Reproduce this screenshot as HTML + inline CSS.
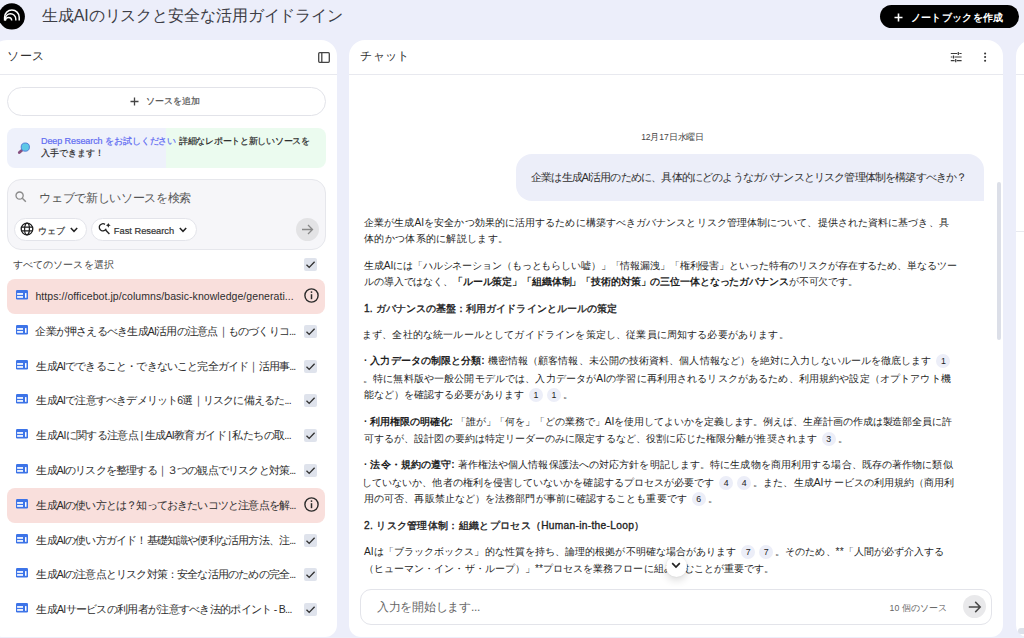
<!DOCTYPE html>
<html lang="ja"><head><meta charset="utf-8">
<style>
*{box-sizing:border-box;margin:0;padding:0}
html,body{width:1024px;height:638px;overflow:hidden}
body{background:#eceefa;font-family:"Liberation Sans",sans-serif;color:#1f1f1f;position:relative}
.a{position:absolute}
svg{position:absolute;overflow:visible}
.newbtn{left:880px;top:5px;width:139px;height:23px;border-radius:12px;background:#000}
.newbtn span{position:absolute;color:#fff;line-height:23px;font-weight:bold;white-space:nowrap}
.panel{background:#fff;border-radius:16px}
.p1{left:-9px;top:40px;width:346px;height:596.5px;border-radius:16px 16px 12px 12px}
.p2{left:349px;top:40px;width:654px;height:596.5px;border-radius:16px 16px 12px 12px}
.p3{left:1016px;top:40px;width:40px;height:596.5px;border-radius:16px 16px 12px 12px}
.ph{font-size:12px;line-height:16px;color:#303030;white-space:nowrap}
.hr{height:1px;background:#e8e9ef}
.row{left:7px;width:318px;height:35px;border-radius:8px}
.pink{background:#f9dfdc}
.rtext{position:absolute;left:29px;top:0;line-height:35px;font-size:10.5px;color:#2d2d2d;white-space:nowrap}
.chk{position:absolute;left:297px;top:11px;width:13px;height:13px;background:#dfe3ec;border-radius:2px}
.ct{position:absolute;left:364px;font-size:10.2px;line-height:17px;color:#1f1f1f;white-space:nowrap}
.ct b{font-weight:bold;color:#1f1f1f}
.h{font-weight:normal;-webkit-text-stroke:0.35px #1f1f1f}
.cite{display:inline-block;width:14px;height:14px;border-radius:50%;background:#eceef8;font-size:8.8px;line-height:14px;text-align:center;vertical-align:middle;color:#222;margin:0 2px;font-weight:normal;position:relative;top:0px;letter-spacing:0}
</style></head><body>
<!-- header -->
<svg style="left:0;top:0" width="30" height="32" viewBox="0 0 30 32">
  <circle cx="11.8" cy="16.4" r="13.1" fill="#000"/>
  <path d="M4.6 20.6V17.3A7.3 7.3 0 0 1 19.2 17.3V20.6" fill="none" stroke="#fff" stroke-width="1.5"/>
  <path d="M5.2 20.6V19.05A5.3 5.3 0 0 1 15.8 19.05V20.6" fill="none" stroke="#fff" stroke-width="1.4"/>
  <path d="M5.5 20.6A3.1 3.1 0 0 1 11.7 20.6" fill="none" stroke="#fff" stroke-width="1.4"/>
</svg>
<div id="t_title" class="a" style="left:42.00px;top:5.40px;font-size:16.000px;letter-spacing:-0.105px;line-height:22px;color:#3d3d45;white-space:nowrap">生成AIのリスクと安全な活用ガイドライン</div>
<div class="a newbtn">
  <svg style="left:14px;top:8px" width="9" height="9" viewBox="0 0 9 9"><path d="M4.5 0.5V8.5M0.5 4.5H8.5" stroke="#fff" stroke-width="1.6"/></svg>
  <span id="t_new" style="left:30.80px;top:0.50px;font-size:10.309px;letter-spacing:0.325px;">ノートブックを作成</span>
</div>

<!-- panels -->
<div class="a panel p1"></div>
<div class="a panel p2"></div>
<div class="a panel p3"></div>

<!-- source panel -->
<div id="t_src" class="a ph" style="left:7.20px;top:48.40px;font-size:12.367px;letter-spacing:0.45px;">ソース</div>
<svg style="left:318px;top:52px" width="12" height="11" viewBox="0 0 12 11"><rect x="0.7" y="0.7" width="10.6" height="9.6" rx="1" fill="none" stroke="#444" stroke-width="1.3"/><path d="M3.8 0.7V10.3" stroke="#444" stroke-width="1.3"/></svg>
<div class="a hr" style="left:0;top:74px;width:337px"></div>

<div class="a" style="left:7px;top:87px;width:319px;height:29px;border:1px solid #e2e3e9;border-radius:15px"></div>
<svg style="left:130px;top:97px" width="9" height="9" viewBox="0 0 9 9"><path d="M4.5 0.5V8.5M0.5 4.5H8.5" stroke="#444" stroke-width="1.3"/></svg>
<div id="t_add" class="a" style="left:145.80px;top:93.90px;font-size:9.040px;line-height:14px;color:#555;white-space:nowrap;-webkit-text-stroke:0.2px #555;">ソースを追加</div>

<div class="a" style="left:7px;top:127.5px;width:319px;height:40px;border-radius:8px;background:linear-gradient(90deg,#eef1fb 50%,#ebfbef 50%)"></div>
<svg style="left:17px;top:140px" width="16" height="16" viewBox="0 0 16 16"><path d="M2.3 12.6 L5.2 9.9" stroke="#86507e" stroke-width="2.8" stroke-linecap="round"/><circle cx="8.3" cy="7.1" r="4.1" fill="#5cc8e6" stroke="#4f7ed8" stroke-width="1"/></svg>
<div id="t_dr1" class="a" style="left:41.00px;top:135.40px;font-size:9.000px;letter-spacing:-0.08px;line-height:12px;white-space:nowrap;color:#5f6cf2;-webkit-text-stroke:0.2px #5f6cf2;">Deep Research をお試しください</div>
<div id="t_dr1b" class="a" style="left:178.80px;top:135.40px;font-size:9.000px;letter-spacing:-0.256px;line-height:12px;white-space:nowrap;color:#2a2a2a;-webkit-text-stroke:0.2px #2a2a2a;">詳細なレポートと新しいソースを</div>
<div id="t_dr2" class="a" style="left:41.00px;top:146.80px;font-size:9.122px;line-height:12px;white-space:nowrap;color:#303030;-webkit-text-stroke:0.2px #303030;">入手できます！</div>

<div class="a" style="left:7px;top:179px;width:319px;height:71px;border:1px solid #e6e7ec;border-radius:14px;background:#f6f6f9"></div>
<svg style="left:15px;top:191px" width="12" height="12" viewBox="0 0 12 12"><circle cx="4.6" cy="4.6" r="3.6" fill="none" stroke="#8a8a8a" stroke-width="1.3"/><path d="M7.3 7.3L10.8 10.8" stroke="#8a8a8a" stroke-width="1.4"/></svg>
<div id="t_search" class="a" style="left:39.40px;top:189.50px;font-size:11.773px;letter-spacing:-0.334px;line-height:16px;color:#555;white-space:nowrap">ウェブで新しいソースを検索</div>

<div class="a" style="left:14px;top:218px;width:73px;height:23px;border:1px solid #e3e4ea;border-radius:12px;background:#fff"></div>
<svg style="left:20.4px;top:222.1px" width="14" height="14" viewBox="0 0 14 14"><circle cx="7" cy="7" r="5.8" fill="none" stroke="#1f1f1f" stroke-width="1.3"/><ellipse cx="7" cy="7" rx="2.4" ry="5.8" fill="none" stroke="#1f1f1f" stroke-width="1.2"/><path d="M1.4 5.1H12.6M1.4 8.9H12.6" stroke="#1f1f1f" stroke-width="1.2"/></svg>
<div id="t_web" class="a" style="left:37.60px;top:223.60px;font-size:8.924px;letter-spacing:0.15px;line-height:14px;color:#333;white-space:nowrap;-webkit-text-stroke:0.2px #333;">ウェブ</div>
<svg style="left:70px;top:226.5px" width="8" height="6" viewBox="0 0 8 6"><path d="M0.8 1L4 4.3L7.2 1" fill="none" stroke="#222" stroke-width="1.5"/></svg>

<div class="a" style="left:91px;top:218px;width:106px;height:23px;border:1px solid #e3e4ea;border-radius:12px;background:#fff"></div>
<svg style="left:98px;top:222px" width="14" height="14" viewBox="0 0 14 14"><path d="M8.16 6.82 A3.6 3.6 0 1 1 6.96 2.35" fill="none" stroke="#222" stroke-width="1.3"/><path d="M7.6 8.1L11.4 11.9" stroke="#222" stroke-width="1.4"/><path d="M10.3 0.9 Q10.7 2.9 12.7 3.3 Q10.7 3.7 10.3 5.7 Q9.9 3.7 7.9 3.3 Q9.9 2.9 10.3 0.9Z" fill="#222"/></svg>
<div id="t_fast" class="a" style="left:113.80px;top:223.90px;font-size:9.292px;line-height:14px;color:#333;white-space:nowrap;-webkit-text-stroke:0.2px #333;">Fast Research</div>
<svg style="left:179px;top:226.5px" width="8" height="6" viewBox="0 0 8 6"><path d="M0.8 1L4 4.3L7.2 1" fill="none" stroke="#222" stroke-width="1.5"/></svg>

<div class="a" style="left:296px;top:218px;width:23px;height:23px;border-radius:50%;background:#e3e3e5"></div>
<svg style="left:301px;top:224px" width="13" height="11" viewBox="0 0 13 11"><path d="M1 5.5H11.5M7 1L11.5 5.5L7 10" fill="none" stroke="#888" stroke-width="1.3"/></svg>

<div id="t_all" class="a" style="left:12.60px;top:258.10px;font-size:10.371px;letter-spacing:0.132px;line-height:14px;color:#444;white-space:nowrap">すべてのソースを選択</div>
<div class="a" style="left:304px;top:258px;width:13px;height:13px;background:#dfe3ec;border-radius:2px"></div>
<svg style="left:304px;top:258px" width="13" height="13" viewBox="0 0 13 13"><path d="M2.5 6.8L5.2 9.4L10.6 3.8" fill="none" stroke="#303030" stroke-width="1.35"/></svg>

<div class="a row pink" style="top:279.00px"><svg style="left:9px;top:11px" width="12" height="10" viewBox="0 0 12 10"><rect x="0" y="0" width="12" height="9.4" rx="1.2" fill="#3d74e8"/><rect x="1.1" y="3.1" width="5.9" height="1.7" fill="#fff"/><rect x="1.1" y="6.1" width="5.9" height="1.7" fill="#fff"/><rect x="9" y="3.1" width="1.5" height="4.7" fill="#fff"/></svg><div id="r0" class="rtext" style="left:28.40px;top:0.00px;font-size:10.500px;letter-spacing:0.062px;">https://officebot.jp/columns/basic-knowledge/generati...</div><svg style="left:297px;top:9px" width="15" height="15" viewBox="0 0 15 15"><circle cx="7.5" cy="7.5" r="6.6" fill="none" stroke="#2b2b2b" stroke-width="1.4"/><path d="M7.5 6.2V11.2" stroke="#2b2b2b" stroke-width="1.5"/><circle cx="7.5" cy="4.1" r="0.9" fill="#2b2b2b"/></svg></div>
<div class="a row" style="top:313.80px"><svg style="left:9px;top:11px" width="12" height="10" viewBox="0 0 12 10"><rect x="0" y="0" width="12" height="9.4" rx="1.2" fill="#3d74e8"/><rect x="1.1" y="3.1" width="5.9" height="1.7" fill="#fff"/><rect x="1.1" y="6.1" width="5.9" height="1.7" fill="#fff"/><rect x="9" y="3.1" width="1.5" height="4.7" fill="#fff"/></svg><div id="r1" class="rtext" style="left:28.40px;top:0.00px;font-size:10.500px;letter-spacing:-0.779px;">企業が押さえるべき生成AI活用の注意点｜ものづくりコ...</div><div class="chk"></div><svg style="left:297px;top:11px" width="13" height="13" viewBox="0 0 13 13"><path d="M2.5 6.8L5.2 9.4L10.6 3.8" fill="none" stroke="#303030" stroke-width="1.35"/></svg></div>
<div class="a row" style="top:348.60px"><svg style="left:9px;top:11px" width="12" height="10" viewBox="0 0 12 10"><rect x="0" y="0" width="12" height="9.4" rx="1.2" fill="#3d74e8"/><rect x="1.1" y="3.1" width="5.9" height="1.7" fill="#fff"/><rect x="1.1" y="6.1" width="5.9" height="1.7" fill="#fff"/><rect x="9" y="3.1" width="1.5" height="4.7" fill="#fff"/></svg><div id="r2" class="rtext" style="left:29.40px;top:0.00px;font-size:10.500px;letter-spacing:-0.814px;">生成AIでできること・できないこと完全ガイド｜活用事...</div><div class="chk"></div><svg style="left:297px;top:11px" width="13" height="13" viewBox="0 0 13 13"><path d="M2.5 6.8L5.2 9.4L10.6 3.8" fill="none" stroke="#303030" stroke-width="1.35"/></svg></div>
<div class="a row" style="top:383.40px"><svg style="left:9px;top:11px" width="12" height="10" viewBox="0 0 12 10"><rect x="0" y="0" width="12" height="9.4" rx="1.2" fill="#3d74e8"/><rect x="1.1" y="3.1" width="5.9" height="1.7" fill="#fff"/><rect x="1.1" y="6.1" width="5.9" height="1.7" fill="#fff"/><rect x="9" y="3.1" width="1.5" height="4.7" fill="#fff"/></svg><div id="r3" class="rtext" style="left:29.40px;top:0.00px;font-size:10.500px;letter-spacing:-0.797px;">生成AIで注意すべきデメリット6選｜リスクに備えるた...</div><div class="chk"></div><svg style="left:297px;top:11px" width="13" height="13" viewBox="0 0 13 13"><path d="M2.5 6.8L5.2 9.4L10.6 3.8" fill="none" stroke="#303030" stroke-width="1.35"/></svg></div>
<div class="a row" style="top:418.20px"><svg style="left:9px;top:11px" width="12" height="10" viewBox="0 0 12 10"><rect x="0" y="0" width="12" height="9.4" rx="1.2" fill="#3d74e8"/><rect x="1.1" y="3.1" width="5.9" height="1.7" fill="#fff"/><rect x="1.1" y="6.1" width="5.9" height="1.7" fill="#fff"/><rect x="9" y="3.1" width="1.5" height="4.7" fill="#fff"/></svg><div id="r4" class="rtext" style="left:29.40px;top:0.00px;font-size:10.500px;letter-spacing:-0.649px;">生成AIに関する注意点 | 生成AI教育ガイド | 私たちの取...</div><div class="chk"></div><svg style="left:297px;top:11px" width="13" height="13" viewBox="0 0 13 13"><path d="M2.5 6.8L5.2 9.4L10.6 3.8" fill="none" stroke="#303030" stroke-width="1.35"/></svg></div>
<div class="a row" style="top:453.00px"><svg style="left:9px;top:11px" width="12" height="10" viewBox="0 0 12 10"><rect x="0" y="0" width="12" height="9.4" rx="1.2" fill="#3d74e8"/><rect x="1.1" y="3.1" width="5.9" height="1.7" fill="#fff"/><rect x="1.1" y="6.1" width="5.9" height="1.7" fill="#fff"/><rect x="9" y="3.1" width="1.5" height="4.7" fill="#fff"/></svg><div id="r5" class="rtext" style="left:29.40px;top:0.00px;font-size:10.500px;letter-spacing:-0.814px;">生成AIのリスクを整理する｜３つの観点でリスクと対策...</div><div class="chk"></div><svg style="left:297px;top:11px" width="13" height="13" viewBox="0 0 13 13"><path d="M2.5 6.8L5.2 9.4L10.6 3.8" fill="none" stroke="#303030" stroke-width="1.35"/></svg></div>
<div class="a row pink" style="top:487.80px"><svg style="left:9px;top:11px" width="12" height="10" viewBox="0 0 12 10"><rect x="0" y="0" width="12" height="9.4" rx="1.2" fill="#3d74e8"/><rect x="1.1" y="3.1" width="5.9" height="1.7" fill="#fff"/><rect x="1.1" y="6.1" width="5.9" height="1.7" fill="#fff"/><rect x="9" y="3.1" width="1.5" height="4.7" fill="#fff"/></svg><div id="r6" class="rtext" style="left:29.40px;top:0.00px;font-size:10.500px;letter-spacing:-0.813px;">生成AIの使い方とは？知っておきたいコツと注意点を解...</div><svg style="left:297px;top:9px" width="15" height="15" viewBox="0 0 15 15"><circle cx="7.5" cy="7.5" r="6.6" fill="none" stroke="#2b2b2b" stroke-width="1.4"/><path d="M7.5 6.2V11.2" stroke="#2b2b2b" stroke-width="1.5"/><circle cx="7.5" cy="4.1" r="0.9" fill="#2b2b2b"/></svg></div>
<div class="a row" style="top:522.60px"><svg style="left:9px;top:11px" width="12" height="10" viewBox="0 0 12 10"><rect x="0" y="0" width="12" height="9.4" rx="1.2" fill="#3d74e8"/><rect x="1.1" y="3.1" width="5.9" height="1.7" fill="#fff"/><rect x="1.1" y="6.1" width="5.9" height="1.7" fill="#fff"/><rect x="9" y="3.1" width="1.5" height="4.7" fill="#fff"/></svg><div id="r7" class="rtext" style="left:29.40px;top:0.00px;font-size:10.500px;letter-spacing:-0.814px;">生成AIの使い方ガイド！基礎知識や便利な活用方法、注...</div><div class="chk"></div><svg style="left:297px;top:11px" width="13" height="13" viewBox="0 0 13 13"><path d="M2.5 6.8L5.2 9.4L10.6 3.8" fill="none" stroke="#303030" stroke-width="1.35"/></svg></div>
<div class="a row" style="top:557.40px"><svg style="left:9px;top:11px" width="12" height="10" viewBox="0 0 12 10"><rect x="0" y="0" width="12" height="9.4" rx="1.2" fill="#3d74e8"/><rect x="1.1" y="3.1" width="5.9" height="1.7" fill="#fff"/><rect x="1.1" y="6.1" width="5.9" height="1.7" fill="#fff"/><rect x="9" y="3.1" width="1.5" height="4.7" fill="#fff"/></svg><div id="r8" class="rtext" style="left:29.40px;top:0.00px;font-size:10.500px;letter-spacing:-0.814px;">生成AIの注意点とリスク対策：安全な活用のための完全...</div><div class="chk"></div><svg style="left:297px;top:11px" width="13" height="13" viewBox="0 0 13 13"><path d="M2.5 6.8L5.2 9.4L10.6 3.8" fill="none" stroke="#303030" stroke-width="1.35"/></svg></div>
<div class="a row" style="top:592.20px"><svg style="left:9px;top:11px" width="12" height="10" viewBox="0 0 12 10"><rect x="0" y="0" width="12" height="9.4" rx="1.2" fill="#3d74e8"/><rect x="1.1" y="3.1" width="5.9" height="1.7" fill="#fff"/><rect x="1.1" y="6.1" width="5.9" height="1.7" fill="#fff"/><rect x="9" y="3.1" width="1.5" height="4.7" fill="#fff"/></svg><div id="r9" class="rtext" style="left:29.40px;top:0.00px;font-size:10.500px;letter-spacing:-0.699px;">生成AIサービスの利用者が注意すべき法的ポイント - B...</div><div class="chk"></div><svg style="left:297px;top:11px" width="13" height="13" viewBox="0 0 13 13"><path d="M2.5 6.8L5.2 9.4L10.6 3.8" fill="none" stroke="#303030" stroke-width="1.35"/></svg></div>

<!-- chat panel -->
<div id="t_chat" class="a ph" style="left:360.40px;top:48.30px;font-size:12.198px;letter-spacing:0.2px;">チャット</div>
<svg style="left:950px;top:51px" width="12" height="12" viewBox="0 0 12 12"><path d="M0.8 2.5H7.2M9.4 2.5H11.6M0.8 6H2.4M4.6 6H11.6M0.8 9.7H4.6M6.8 9.7H11.6M8.3 0.9V4.1M3.5 4.4V7.6M5.7 8.1V11.3" fill="none" stroke="#3a3a3a" stroke-width="1.2"/></svg>
<svg style="left:983px;top:51px" width="4" height="12" viewBox="0 0 4 12"><circle cx="2.1" cy="2.5" r="1.05" fill="#333"/><circle cx="2.1" cy="6" r="1.05" fill="#333"/><circle cx="2.1" cy="9.7" r="1.05" fill="#333"/></svg>
<div class="a hr" style="left:349px;top:74px;width:654px"></div>
<div class="a hr" style="left:1016px;top:74px;width:10px"></div>
<div class="a hr" style="left:1016px;top:231px;width:10px"></div>
<div class="a" style="left:1018px;top:628px;width:12px;height:5.5px;border-radius:3px;background:#dde1ea"></div>

<div id="t_date" class="a" style="left:641.20px;top:130.60px;font-size:8.537px;letter-spacing:-0.100px;line-height:13px;color:#444;white-space:nowrap">12月17日水曜日</div>
<div class="a" style="left:516px;top:154px;width:468px;height:47px;background:#eceef9;border-radius:16px 16px 0 16px"></div>
<div id="t_bub" class="a" style="left:531.00px;top:169.20px;font-size:10.524px;letter-spacing:-0.829px;line-height:17px;color:#303030;white-space:nowrap">企業は生成AI活用のために、具体的にどのようなガバナンスとリスク管理体制を構築すべきか？</div>
<div class="a" style="left:997px;top:182px;width:4px;height:158px;background:#dcdfe8;border-radius:2px"></div>

<div id="l1" class="ct" style="left:364.00px;top:213.50px;font-size:10.200px;letter-spacing:0.086px;">企業が生成AIを安全かつ効果的に活用するために構築すべきガバナンスとリスク管理体制について、提供された資料に基づき、具</div>
<div id="l2" class="ct" style="left:364.00px;top:230.10px;font-size:10.200px;letter-spacing:0.309px;">体的かつ体系的に解説します。</div>
<div id="l3" class="ct" style="left:364.00px;top:256.90px;font-size:10.200px;letter-spacing:-0.118px;">生成AIには「ハルシネーション（もっともらしい嘘）」「情報漏洩」「権利侵害」といった特有のリスクが存在するため、単なるツー</div>
<div id="l4" class="ct" style="left:364.00px;top:273.20px;font-size:10.200px;letter-spacing:-0.122px;">ルの導入ではなく、<b>「ルール策定」「組織体制」「技術的対策」の三位一体となったガバナンス</b>が不可欠です。</div>
<div id="l5" class="ct h" style="left:364.00px;top:299.70px;font-size:10.200px;letter-spacing:0.067px;">1. ガバナンスの基盤：利用ガイドラインとルールの策定</div>
<div id="l6" class="ct" style="left:362.00px;top:325.90px;font-size:10.200px;letter-spacing:0.161px;">まず、全社的な統一ルールとしてガイドラインを策定し、従業員に周知する必要があります。</div>
<div id="l7" class="ct" style="left:364.00px;top:352.10px;font-size:10.200px;letter-spacing:0.086px;"><b>· 入力データの制限と分類:</b> 機密情報（顧客情報、未公開の技術資料、個人情報など）を絶対に入力しないルールを徹底します <span class="cite">1</span></div>
<div id="l8" class="ct" style="left:363.00px;top:369.50px;font-size:10.200px;letter-spacing:0.139px;">。特に無料版や一般公開モデルでは、入力データがAIの学習に再利用されるリスクがあるため、利用規約や設定（オプトアウト機</div>
<div id="l9" class="ct" style="left:364.00px;top:386.00px;font-size:10.200px;">能など）を確認する必要があります <span class="cite">1</span><span class="cite">1</span>。</div>
<div id="l10" class="ct" style="left:364.00px;top:413.20px;font-size:10.200px;letter-spacing:-0.063px;"><b>· 利用権限の明確化:</b> 「誰が」「何を」「どの業務で」AIを使用してよいかを定義します。例えば、生産計画の作成は製造部全員に許</div>
<div id="l11" class="ct" style="left:364.00px;top:429.90px;font-size:10.200px;letter-spacing:0.064px;">可するが、設計図の要約は特定リーダーのみに限定するなど、役割に応じた権限分離が推奨されます <span class="cite">3</span>。</div>
<div id="l12" class="ct" style="left:364.00px;top:456.10px;font-size:10.200px;letter-spacing:0.101px;"><b>· 法令・規約の遵守:</b> 著作権法や個人情報保護法への対応方針を明記します。特に生成物を商用利用する場合、既存の著作物に類似</div>
<div id="l13" class="ct" style="left:362.00px;top:473.50px;font-size:10.200px;letter-spacing:0.068px;">していないか、他者の権利を侵害していないかを確認するプロセスが必要です <span class="cite">4</span><span class="cite">4</span>。また、生成AIサービスの利用規約（商用利</div>
<div id="l14" class="ct" style="left:364.00px;top:490.00px;font-size:10.200px;letter-spacing:0.089px;">用の可否、再販禁止など）を法務部門が事前に確認することも重要です <span class="cite">6</span>。</div>
<div id="l15" class="ct h" style="left:364.00px;top:516.50px;font-size:10.200px;letter-spacing:0.306px;">2. リスク管理体制：組織とプロセス（Human-in-the-Loop）</div>
<div id="l16" class="ct" style="left:364.00px;top:542.50px;font-size:10.200px;letter-spacing:0.070px;">AIは「ブラックボックス」的な性質を持ち、論理的根拠が不明確な場合があります <span class="cite">7</span><span class="cite">7</span>。そのため、**「人間が必ず介入する</div>
<div id="l17" class="ct" style="left:364.00px;top:559.50px;font-size:10.200px;letter-spacing:0.055px;">（ヒューマン・イン・ザ・ループ）」**プロセスを業務フローに組み込むことが重要です。</div>

<div class="a" style="left:665.5px;top:555.5px;width:21.5px;height:21.5px;border-radius:50%;background:#fff;box-shadow:0 3px 8px rgba(0,0,0,0.16),0 0 2px rgba(0,0,0,0.08)"></div>
<svg style="left:671.3px;top:562.3px" width="10" height="7" viewBox="0 0 10 7"><path d="M1.2 1.2L5 5L8.8 1.2" fill="none" stroke="#222" stroke-width="1.7"/></svg>

<div class="a" style="left:360px;top:589px;width:632px;height:36px;border:1px solid #e3e4ea;border-radius:11px;background:#fff"></div>
<div id="t_input" class="a" style="left:377.00px;top:598.80px;font-size:11.874px;letter-spacing:-0.260px;line-height:16px;color:#666;white-space:nowrap">入力を開始します...</div>
<div id="t_count" class="a" style="left:889.60px;top:601.60px;font-size:8.744px;line-height:13px;color:#666;white-space:nowrap">10 個のソース</div>
<div class="a" style="left:962.6px;top:595.4px;width:23px;height:23px;border-radius:50%;background:#e9e9eb"></div>
<svg style="left:967.5px;top:600.8px" width="14" height="12" viewBox="0 0 14 12"><path d="M0.8 6H12.2M7.2 0.9L12.2 6L7.2 11.1" fill="none" stroke="#4a4a4a" stroke-width="1.5"/></svg>
</body></html>
